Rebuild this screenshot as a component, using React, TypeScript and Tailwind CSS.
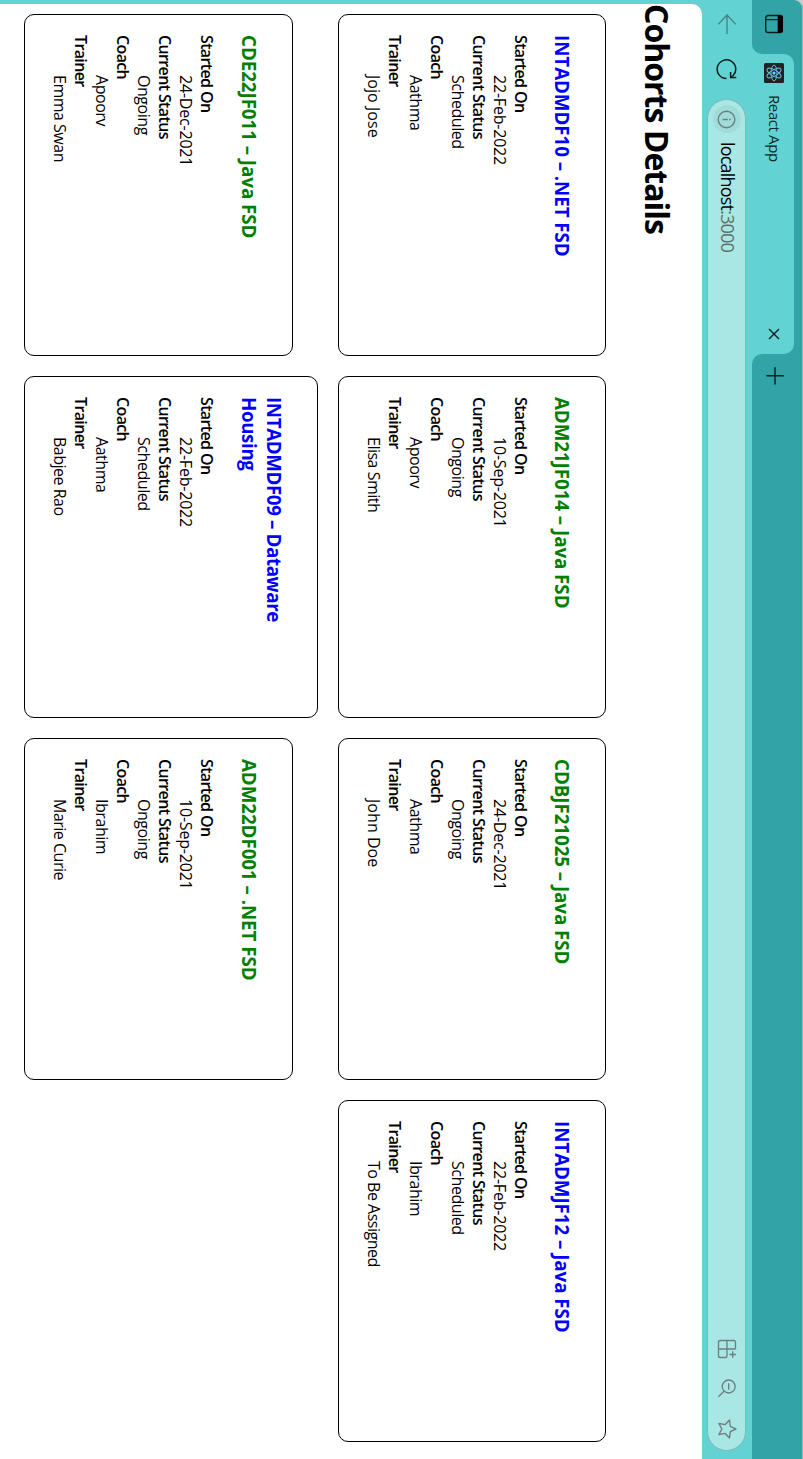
import React from "react";

type Cohort = {
  title: string;
  started: string;
  status: "Scheduled" | "Ongoing";
  coach: string;
  trainer: string;
};

const firstRow: Cohort[] = [
  { title: "INTADMDF10 – .NET FSD", started: "22-Feb-2022", status: "Scheduled", coach: "Aathma", trainer: "Jojo Jose" },
  { title: "ADM21JF014 – Java FSD", started: "10-Sep-2021", status: "Ongoing", coach: "Apoorv", trainer: "Elisa Smith" },
  { title: "CDBJF21025 – Java FSD", started: "24-Dec-2021", status: "Ongoing", coach: "Aathma", trainer: "John Doe" },
  { title: "INTADMJF12 – Java FSD", started: "22-Feb-2022", status: "Scheduled", coach: "Ibrahim", trainer: "To Be Assigned" },
];

const secondRow: Cohort[] = [
  { title: "CDE22JF011 – Java FSD", started: "24-Dec-2021", status: "Ongoing", coach: "Apoorv", trainer: "Emma Swan" },
  { title: "INTADMDF09 – Dataware Housing", started: "22-Feb-2022", status: "Scheduled", coach: "Aathma", trainer: "Babjee Rao" },
  { title: "ADM22DF001 – .NET FSD", started: "10-Sep-2021", status: "Ongoing", coach: "Ibrahim", trainer: "Marie Curie" },
];

function Field({ label, value, spacing = "tracking-[-0.45px]" }: { label: string; value: string; spacing?: string }) {
  return (
    <>
      <dt className="font-semibold tracking-[-0.63px]">{label}</dt>
      <dd className={`ml-10 ${spacing}`}>{value}</dd>
    </>
  );
}

function CohortCard({ cohort, titleGap }: { cohort: Cohort; titleGap: string }) {
  const color = cohort.status === "Ongoing" ? "text-[#008000]" : "text-[#0000ff]";
  const titleSpacing = cohort.title.length > 24 ? "tracking-[-0.36px]" : "tracking-[-0.03px]";
  const trainerSpacing = cohort.trainer.startsWith("J") ? "tracking-[0.05px]" : "tracking-[-0.5px]";
  return (
    <div className="w-[342px] shrink-0 rounded-[10px] border border-black px-5 pt-[29.5px] pb-[24.5px]">
      <h3 className={`${titleGap} pr-3 text-[18.72px] leading-[25px] font-bold ${titleSpacing} ${color}`}>{cohort.title}</h3>
      <dl className="text-[16px] leading-[21px]">
        <Field label="Started On" value={cohort.started} spacing="tracking-[-0.2px]" />
        <Field label="Current Status" value={cohort.status} />
        <Field label="Coach" value={cohort.coach} />
        <Field label="Trainer" value={cohort.trainer} spacing={trainerSpacing} />
      </dl>
    </div>
  );
}

function TabBar() {
  return (
    <div className="flex h-[51px] items-end rounded-tl-[9px] border-t border-[#8fb9bd] bg-[#32a4a8]">
      <div className="flex h-[50px] w-[54px] items-start pt-[18px] pl-[14px]">
        <svg width="20" height="20" viewBox="0 0 20 20" fill="none">
          <rect x="1.5" y="1.7" width="17" height="16.6" rx="2.6" stroke="#0c1c1e" strokeWidth="1.4" />
          <path d="M1 6.3V4a3 3 0 0 1 3-3h12a3 3 0 0 1 3 3v2.3z" fill="#000" />
          <path d="M5.6 6v12" stroke="#0c1c1e" strokeWidth="1.2" />
        </svg>
      </div>
      <div className="relative flex h-[42px] w-[300px] items-center rounded-t-[10px] bg-[#62d2d2] pl-[9px]">
        <svg className="absolute bottom-0 left-[-10px]" width="10" height="10">
          <path d="M10 0v10H0A10 10 0 0 0 10 0z" fill="#62d2d2" />
        </svg>
        <svg className="absolute right-[-10px] bottom-0" width="10" height="10">
          <path d="M0 0v10h10A10 10 0 0 1 0 0z" fill="#62d2d2" />
        </svg>
        <svg className="mb-[2px]" width="20" height="20" viewBox="0 0 20 20" fill="none">
          <rect width="20" height="20" rx="1.5" fill="#222" />
          <g stroke="#61b8d8" strokeWidth="1">
            <ellipse cx="10" cy="10" rx="7.9" ry="3" />
            <ellipse cx="10" cy="10" rx="7.9" ry="3" transform="rotate(60 10 10)" />
            <ellipse cx="10" cy="10" rx="7.9" ry="3" transform="rotate(120 10 10)" />
          </g>
          <circle cx="10" cy="10" r="1.6" fill="#61dafb" />
        </svg>
        <span className="ml-[12px] pb-[3px] text-[15px] tracking-[-0.4px] text-[#10282a]">React App</span>
        <svg className="mr-[14px] mb-[2px] ml-auto" width="12" height="12" viewBox="0 0 12 12">
          <path d="M1 1l10 10M11 1L1 11" stroke="#0c1c1e" strokeWidth="1.4" />
        </svg>
      </div>
      <svg className="mb-[13px] ml-[12px]" width="20" height="20" viewBox="0 0 20 20">
        <path d="M9.8 1.2v17.4M1.2 10h17.4" stroke="#0c1c1e" strokeWidth="1.4" />
      </svg>
    </div>
  );
}

function Toolbar() {
  return (
    <div className="flex h-[50px] items-center bg-[#62d2d2]">
      <svg className="ml-[14px]" width="20" height="20" viewBox="0 0 20 20" fill="none" stroke="#43807f" strokeWidth="1.3">
        <path d="M10.4 1.2L1 10l9.4 8.8M1 10h19" />
      </svg>
      <svg className="ml-[25px]" width="21" height="21" viewBox="0 0 21 21" fill="none" stroke="#0c1c1e" strokeWidth="1.5">
        <path d="M19.5 10.5A9.3 9.3 0 1 1 16.8 4L18.6 6.3" />
        <path d="M18.6 0.7V6.4h-5.5" />
      </svg>
      <div className="ml-[19px] flex h-[39px] w-[1352px] items-center rounded-full border border-[#86b4b4] bg-[#a9e7e4] pl-[5px]">
        <span className="flex size-[28px] items-center justify-center rounded-full bg-[#a0dcda]">
          <svg width="19" height="19" viewBox="0 0 19 19" fill="none" stroke="#6b7f7e" strokeWidth="1.4">
            <circle cx="9.5" cy="9.5" r="8.3" />
            <path d="M9.5 8.2v5.2M9.5 5.4v1.5" />
          </svg>
        </span>
        <span className="ml-[9px] pb-[1.5px] text-[18px] tracking-[-0.8px] text-black">
          localhost<span className="text-[#5f6f6f]">:3000</span>
        </span>
        <svg className="ml-auto" width="20" height="20" viewBox="0 0 20 20" fill="none" stroke="#6f7f7f" strokeWidth="1.35">
          <path d="M10 1.5H3a1.5 1.5 0 0 0-1.5 1.5v14A1.5 1.5 0 0 0 3 18.5h14a1.5 1.5 0 0 0 1.5-1.5V11.5A1.5 1.5 0 0 0 17 10H1.5M10 1.5v17" />
          <path d="M15.5 1v6.6M12.2 4.3h6.6" />
        </svg>
        <svg className="ml-[19px]" width="20" height="20" viewBox="0 0 20 20" fill="none" stroke="#6f7f7f" strokeWidth="1.35">
          <circle cx="8.5" cy="8.3" r="6.5" />
          <path d="M5.2 8.3h6.6M13.2 13l5.6 5.6" />
        </svg>
        <svg className="mr-[11px] ml-[21px]" width="20" height="20" viewBox="0 0 20 20" fill="none" stroke="#6f7f7f" strokeWidth="1.4" strokeLinejoin="round">
          <path d="M10 1l2.7 5.7 6.2.8-4.5 4.3 1.1 6.3L10 15.1l-5.5 3 1.1-6.3L1.1 7.5l6.2-.8z" />
        </svg>
      </div>
    </div>
  );
}

export default function App() {
  return (
    <div className="h-[1459px] w-[803px] overflow-hidden bg-[#d3c8cc]">
      <div className="flex h-[803px] w-[1459px] origin-top-left translate-x-[803px] rotate-90 flex-col rounded-tl-[9px] bg-[#62d2d2] font-['Open_Sans',sans-serif] text-black">
        <TabBar />
        <Toolbar />
        <main className="ml-[4px] flex-1 rounded-tl-[10px] bg-white">
          <h1 className="pt-[23px] text-[32px] leading-[43px] font-bold tracking-[-1px]">Cohorts Details</h1>
          <div className="mt-[30px] ml-[10px] flex items-end gap-5">
            {firstRow.map((c) => (
              <CohortCard key={c.title} cohort={c} titleGap="mb-[19px]" />
            ))}
          </div>
          <div className="mt-[20px] ml-[10px] flex items-end gap-5">
            {secondRow.map((c) => (
              <CohortCard key={c.title} cohort={c} titleGap="mb-[20px]" />
            ))}
          </div>
        </main>
      </div>
    </div>
  );
}
